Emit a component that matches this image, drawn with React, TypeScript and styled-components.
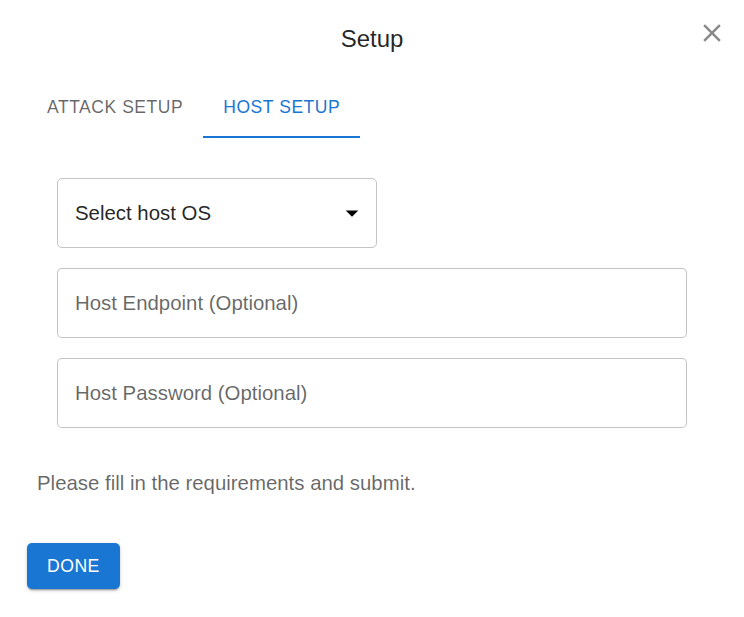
import React from "react";
import styled, { createGlobalStyle } from "styled-components";

const Global = createGlobalStyle`
  html, body { margin: 0; padding: 0; background: #ffffff; }
  body { font-family: "Liberation Sans", Arial, sans-serif; }
  * { box-sizing: border-box; }
`;

const Dialog = styled.div`
  width: 744px;
  min-height: 617px;
  background: #ffffff;
  display: flex;
  flex-direction: column;
`;

const Header = styled.div`
  position: relative;
  padding: 19px 0 19px;
`;

const Title = styled.h2`
  margin: 0;
  text-align: center;
  font-size: 24px;
  line-height: 40px;
  font-weight: 400;
  color: rgba(0, 0, 0, 0.87);
`;

const CloseButton = styled.button`
  position: absolute;
  top: 18px;
  right: 17px;
  width: 30px;
  height: 30px;
  padding: 0;
  border: none;
  background: transparent;
  color: #8a8a8a;
  display: flex;
  align-items: center;
  justify-content: center;
  cursor: pointer;
`;

const TabBar = styled.div`
  display: flex;
  padding-left: 27px;
  height: 60px;
`;

const Tab = styled.button<{ $active?: boolean }>`
  position: relative;
  height: 60px;
  padding: 0 20px 2px;
  border: none;
  background: transparent;
  font-family: "Liberation Sans", Arial, sans-serif;
  font-size: 17.5px;
  letter-spacing: 0.55px;
  text-transform: uppercase;
  color: ${(p) => (p.$active ? "#1976d2" : "rgba(0, 0, 0, 0.6)")};
  cursor: pointer;
  &::after {
    content: "";
    position: absolute;
    left: 0;
    right: 0;
    bottom: 0;
    height: 2.5px;
    background: ${(p) => (p.$active ? "#1976d2" : "transparent")};
  }
`;

const Form = styled.div`
  display: flex;
  flex-direction: column;
  gap: 20px;
  margin-top: 40px;
  padding-left: 57px;
`;

const SelectBox = styled.div`
  width: 320px;
  height: 70px;
  border: 1px solid rgba(0, 0, 0, 0.23);
  border-radius: 5px;
  display: flex;
  align-items: center;
  justify-content: space-between;
  padding: 0 9px 0 17px;
  font-size: 20.4px;
  color: rgba(0, 0, 0, 0.87);
`;

const Field = styled.input`
  width: 630px;
  height: 70px;
  border: 1px solid rgba(0, 0, 0, 0.23);
  border-radius: 5px;
  padding: 0 17px;
  font-family: "Liberation Sans", Arial, sans-serif;
  font-size: 20.4px;
  color: rgba(0, 0, 0, 0.87);
  outline: none;
  &::placeholder {
    color: rgba(0, 0, 0, 0.6);
    opacity: 1;
  }
`;

const Note = styled.p`
  margin: 40px 0 0 37px;
  font-size: 20.4px;
  line-height: 30px;
  color: rgba(0, 0, 0, 0.6);
`;

const Actions = styled.div`
  display: flex;
  padding-left: 27px;
  margin-top: 45px;
`;

const DoneButton = styled.button`
  height: 46px;
  padding: 0 20px;
  border: none;
  border-radius: 5px;
  background: #1976d2;
  color: #ffffff;
  font-family: "Liberation Sans", Arial, sans-serif;
  font-size: 17.6px;
  letter-spacing: 0.5px;
  text-transform: uppercase;
  box-shadow: 0px 3px 1px -2px rgba(0, 0, 0, 0.2),
    0px 2px 2px 0px rgba(0, 0, 0, 0.14), 0px 1px 5px 0px rgba(0, 0, 0, 0.12);
  cursor: pointer;
`;

export default function App() {
  return (
    <>
      <Global />
      <Dialog>
        <Header>
          <Title>Setup</Title>
          <CloseButton aria-label="close">
            <svg width="30" height="30" viewBox="0 0 24 24" fill="currentColor">
              <path d="M19 6.41 17.59 5 12 10.59 6.41 5 5 6.41 10.59 12 5 17.59 6.41 19 12 13.41 17.59 19 19 17.59 13.41 12z" />
            </svg>
          </CloseButton>
        </Header>
        <TabBar>
          <Tab>Attack Setup</Tab>
          <Tab $active>Host Setup</Tab>
        </TabBar>
        <Form>
          <SelectBox>
            <span>Select host OS</span>
            <svg width="30" height="30" viewBox="0 0 24 24" fill="#000">
              <path d="M7 10l5 5 5-5z" />
            </svg>
          </SelectBox>
          <Field placeholder="Host Endpoint (Optional)" />
          <Field type="password" placeholder="Host Password (Optional)" />
        </Form>
        <Note>Please fill in the requirements and submit.</Note>
        <Actions>
          <DoneButton>Done</DoneButton>
        </Actions>
      </Dialog>
    </>
  );
}
